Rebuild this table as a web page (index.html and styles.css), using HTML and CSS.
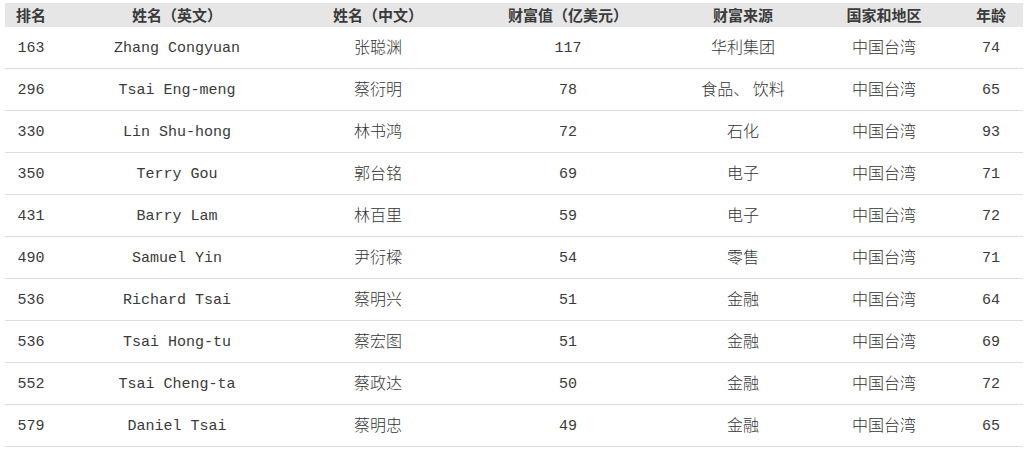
FILE: index.html
```html
<!DOCTYPE html>
<html lang="zh-CN">
<head>
<meta charset="utf-8">
<title>富豪榜</title>
<link rel="stylesheet" href="styles.css">
</head>
<body>
<table class="rich">
  <colgroup>
    <col class="c1"><col class="c2"><col class="c3"><col class="c4"><col class="c5"><col class="c6"><col class="c7">
  </colgroup>
  <thead>
    <tr><th>排名</th><th>姓名（英文）</th><th>姓名（中文）</th><th>财富值（亿美元）</th><th>财富来源</th><th>国家和地区</th><th>年龄</th></tr>
  </thead>
  <tbody>
    <tr><td class="m">163</td><td class="m">Zhang Congyuan</td><td class="z">张聪渊</td><td class="m">117</td><td class="z">华利集团</td><td class="z">中国台湾</td><td class="m">74</td></tr>
    <tr><td class="m">296</td><td class="m">Tsai Eng-meng</td><td class="z">蔡衍明</td><td class="m">78</td><td class="z">食品、 饮料</td><td class="z">中国台湾</td><td class="m">65</td></tr>
    <tr><td class="m">330</td><td class="m">Lin Shu-hong</td><td class="z">林书鸿</td><td class="m">72</td><td class="z">石化</td><td class="z">中国台湾</td><td class="m">93</td></tr>
    <tr><td class="m">350</td><td class="m">Terry Gou</td><td class="z">郭台铭</td><td class="m">69</td><td class="z">电子</td><td class="z">中国台湾</td><td class="m">71</td></tr>
    <tr><td class="m">431</td><td class="m">Barry Lam</td><td class="z">林百里</td><td class="m">59</td><td class="z">电子</td><td class="z">中国台湾</td><td class="m">72</td></tr>
    <tr><td class="m">490</td><td class="m">Samuel Yin</td><td class="z">尹衍樑</td><td class="m">54</td><td class="z">零售</td><td class="z">中国台湾</td><td class="m">71</td></tr>
    <tr><td class="m">536</td><td class="m">Richard Tsai</td><td class="z">蔡明兴</td><td class="m">51</td><td class="z">金融</td><td class="z">中国台湾</td><td class="m">64</td></tr>
    <tr><td class="m">536</td><td class="m">Tsai Hong-tu</td><td class="z">蔡宏图</td><td class="m">51</td><td class="z">金融</td><td class="z">中国台湾</td><td class="m">69</td></tr>
    <tr><td class="m">552</td><td class="m">Tsai Cheng-ta</td><td class="z">蔡政达</td><td class="m">50</td><td class="z">金融</td><td class="z">中国台湾</td><td class="m">72</td></tr>
    <tr><td class="m">579</td><td class="m">Daniel Tsai</td><td class="z">蔡明忠</td><td class="m">49</td><td class="z">金融</td><td class="z">中国台湾</td><td class="m">65</td></tr>
  </tbody>
</table>
</body>
</html>
```
FILE: styles.css
```css
html, body {
  margin: 0;
  padding: 0;
  background: #fff;
}
body {
  padding: 3px 0 0 5px;
  font-family: "Noto Sans CJK SC", sans-serif;
  color: #333;
}
.rich {
  border-collapse: collapse;
  table-layout: fixed;
  width: 1018px;
}
.c1 { width: 52px; }
.c2 { width: 240px; }
.c3 { width: 162px; }
.c4 { width: 218px; }
.c5 { width: 132px; }
.c6 { width: 150px; }
.c7 { width: 64px; }
.rich th {
  background: #e6e6e6;
  height: 24px;
  padding: 0;
  font-size: 15px;
  font-weight: 700;
  line-height: 24px;
  color: #3a3a3a;
  text-align: center;
  white-space: nowrap;
}
.rich td {
  height: 38px;
  padding: 0;
  border-bottom: 1px solid #dedede;
  text-align: center;
  vertical-align: middle;
  white-space: pre;
  line-height: 20px;
}
.rich td.m {
  font-family: "Liberation Mono", monospace;
  font-size: 15px;
  color: #3a3a3a;
  padding-top: 3px;
}
.rich td.z {
  font-family: "Noto Sans CJK SC", sans-serif;
  font-size: 16px;
  font-weight: 300;
  padding-bottom: 3px;
}
```
